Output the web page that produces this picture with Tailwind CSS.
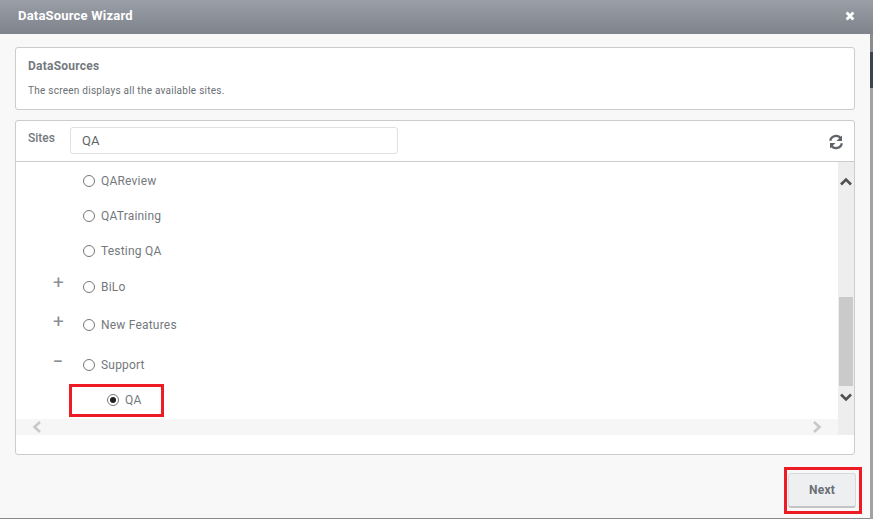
<!DOCTYPE html>
<html>
<head>
<meta charset="utf-8">
<script src="https://cdn.jsdelivr.net/npm/@tailwindcss/browser@4"></script>
</head>
<body class="w-[873px] h-[521px] overflow-hidden bg-white font-['Roboto','Liberation_Sans',sans-serif]">
<div class="relative flex">
  <div class="w-[870px] h-[519px] flex flex-col bg-[#f8f8f8] border-b border-[#8a8a8a]">
    <div class="h-[34px] shrink-0 flex items-center justify-between pl-[18px] pr-[15px] bg-gradient-to-b from-[#9a9ea6] to-[#7e838c]">
      <span class="text-[13px] font-bold text-white leading-none pb-[3px] tracking-[0.2px]">DataSource Wizard</span>
      <svg width="10" height="10" viewBox="0 0 10 10" class="mb-[3px]"><path d="M1.6 1.6 8.4 8.4M8.4 1.6 1.6 8.4" stroke="#fff" stroke-width="2.8" fill="none"/></svg>
    </div>
    <div class="flex-1 px-[15px] pt-[13px] flex flex-col">
      <div class="h-[63px] shrink-0 w-[840px] bg-white border border-[#cccccc] rounded-[3px] pl-[12px] pt-[11px]">
        <div class="text-[12px] font-bold leading-[14px] text-[#74797e] tracking-[0.25px]">DataSources</div>
        <div class="text-[10px] leading-[12px] mt-[12px] text-[#6a6f73] tracking-[0.25px]">The screen displays all the available sites.</div>
      </div>
      <div class="mt-[10px] h-[335px] shrink-0 w-[840px] bg-white border border-[#cccccc] rounded-[3px] flex flex-col">
        <div class="h-[41px] shrink-0 border-b border-[#cccccc] flex items-start pl-[12px] pr-[10px]">
          <span class="text-[12px] font-medium text-[#74797e] leading-[14px] mt-[10px] w-[42px]">Sites</span>
          <div class="w-[328px] h-[27px] mt-[6px] border border-[#e0e0e0] rounded-[3px] flex items-center pl-[11px] text-[13px] text-[#5f6468]">QA</div>
          <svg class="ml-auto mt-[13px]" width="16" height="16" viewBox="0 0 16 16" fill="none" stroke="#5f646a" stroke-width="2.2"><path d="M2.2 6.8A5.8 5.8 0 0 1 12.8 4.6"/><path d="M14 1.5v5.5h-5.5z" fill="#5f646a" stroke="none"/><path d="M13.8 9.2A5.8 5.8 0 0 1 3.2 11.4"/><path d="M2 14.5V9h5.5z" fill="#5f646a" stroke="none"/></svg>
        </div>
        <div class="flex flex-1 min-h-0">
          <div class="w-[822px] flex flex-col">
            <div class="h-[257px] text-[12px] text-[#74787d] tracking-[0.2px] flex flex-col">
              <div class="h-[35px] mt-[1px] flex items-center pl-[67px] gap-[6px]"><span class="w-[12px] h-[12px] rounded-full border border-[#777] bg-white"></span><span>QAReview</span></div>
              <div class="h-[35px] flex items-center pl-[67px] gap-[6px]"><span class="w-[12px] h-[12px] rounded-full border border-[#777] bg-white"></span><span>QATraining</span></div>
              <div class="h-[35px] flex items-center pl-[67px] gap-[6px]"><span class="w-[12px] h-[12px] rounded-full border border-[#777] bg-white"></span><span>Testing QA</span></div>
              <div class="h-[35px] mt-[1px] flex items-center pl-[37px]"><span class="w-[30px] text-[19px] text-[#8b9096] leading-none -mt-[8px]">+</span><span class="w-[12px] h-[12px] rounded-full border border-[#777] bg-white mr-[6px]"></span><span>BiLo</span></div>
              <div class="h-[39px] mt-[1px] flex items-center pl-[37px]"><span class="w-[30px] text-[19px] text-[#8b9096] leading-none -mt-[6px]">+</span><span class="w-[12px] h-[12px] rounded-full border border-[#777] bg-white mr-[6px]"></span><span>New Features</span></div>
              <div class="h-[40px] mt-[1px] flex items-center pl-[37px]"><span class="w-[30px] text-[15px] font-bold text-[#8b9096] leading-none -mt-[7px]">–</span><span class="w-[12px] h-[12px] rounded-full border border-[#777] bg-white mr-[6px]"></span><span>Support</span></div>
              <div class="h-[29px] flex items-center pl-[91px] gap-[6px]"><span class="w-[12px] h-[12px] rounded-full border border-[#777] bg-white flex items-center justify-center"><span class="w-[6px] h-[6px] rounded-full bg-[#222]"></span></span><span>QA</span></div>
            </div>
            <div class="h-[16px] bg-[#f6f6f6] flex items-center justify-between pl-[16px] pr-[16px]">
              <svg width="10" height="12" viewBox="0 0 10 12" fill="none" stroke="#c8c8c8" stroke-width="2.6"><path d="M8 1 2.5 6 8 11"/></svg>
              <svg width="10" height="12" viewBox="0 0 10 12" fill="none" stroke="#c8c8c8" stroke-width="2.6"><path d="M2 1 7.5 6 2 11"/></svg>
            </div>
          </div>
          <div class="w-[16px] h-[273px] bg-[#eeeeee] flex flex-col">
            <div class="h-[135px] flex justify-center pt-[15px]">
              <svg width="12" height="9" viewBox="0 0 12 9" fill="none" stroke="#505050" stroke-width="2.6"><path d="M1 7.5 6 2.5l5 5"/></svg>
            </div>
            <div class="h-[89px] bg-[#cacaca] ml-[1px] w-[14px]"></div>
            <div class="flex justify-center pt-[7px]">
              <svg width="12" height="9" viewBox="0 0 12 9" fill="none" stroke="#505050" stroke-width="2.6"><path d="M1 1.5l5 5 5-5"/></svg>
            </div>
          </div>
        </div>
      </div>
      <div class="flex justify-end -mr-[1px] pt-[18px]">
        <div class="w-[68px] h-[35px] bg-[#eeeff0] border border-[#d9d9d9] border-b-[#c4c4c4] border-b-2 rounded-[3px] flex items-center justify-center text-[12px] font-bold text-[#6a6f75] tracking-[0.2px]">Next</div>
      </div>
    </div>
  </div>
  <div class="w-[3px] h-[519px] flex flex-col">
    <div class="h-[34px] bg-gradient-to-b from-[#9a9ea6] to-[#7e838c]"></div>
    <div class="h-[18px] bg-[#8a8c90]"></div>
    <div class="h-[36px] bg-[#3f444c]"></div>
    <div class="flex-1 bg-[#a2a2a2]"></div>
  </div>
  <div class="absolute left-[69px] top-[384px] w-[95px] h-[33px] border-[3px] border-[#ed1c24]"></div>
  <div class="absolute left-[784px] top-[467px] w-[78px] h-[47px] border-[3px] border-[#ed1c24]"></div>
</div>
</body>
</html>
